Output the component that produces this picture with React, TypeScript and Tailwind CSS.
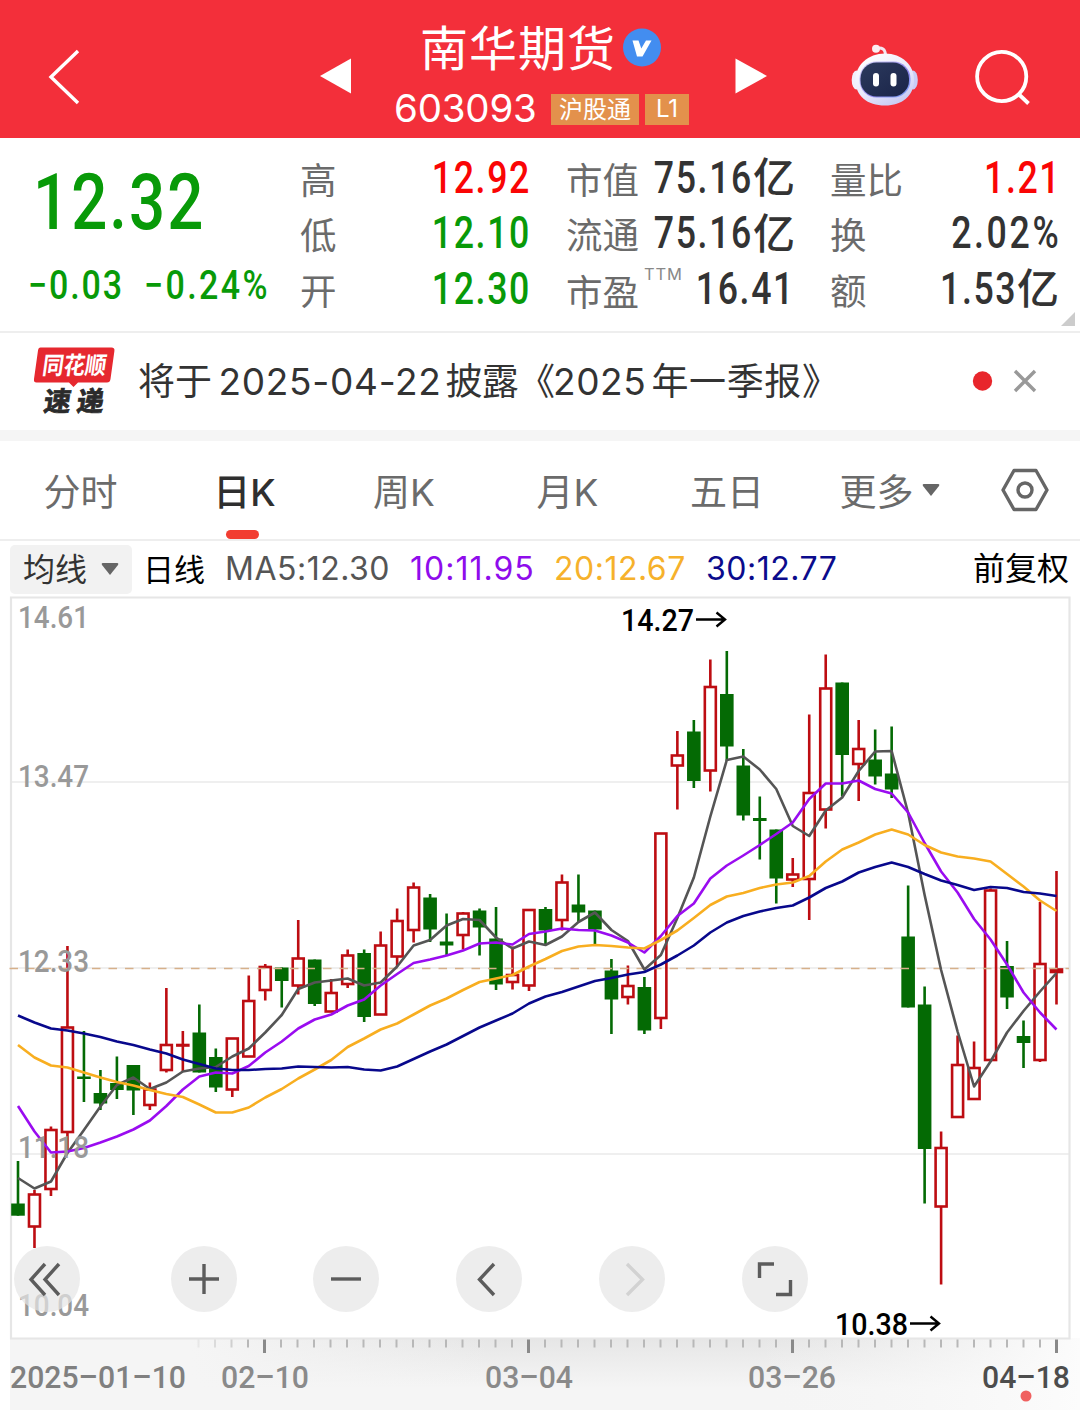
import type { ReactNode } from 'react';
import clsx from 'clsx';

// [direction, high, body top, body bottom, low] in chart coordinates
type Candle = ['up' | 'down', number, number, number, number];

const FIRST_X = 18;
const STEP = 16.484;

const candles: Candle[] = [
  ['down', 1161, 1203.5, 1215.7, 1215.7],
  ['up', 1190, 1194.5, 1226.5, 1248],
  ['up', 1126.5, 1130, 1189, 1196],
  ['up', 946, 1027.5, 1132, 1153],
  ['down', 1031, 1076.5, 1079, 1102],
  ['down', 1070, 1093, 1103.5, 1110],
  ['down', 1056.5, 1083, 1090, 1099],
  ['down', 1065, 1065, 1090.5, 1115],
  ['up', 1082.5, 1089.5, 1105, 1110],
  ['up', 988, 1045, 1070, 1072.5],
  ['up', 1031, 1045, 1045.5, 1071],
  ['down', 1004.5, 1032.5, 1072.5, 1072.5],
  ['down', 1048.5, 1057, 1087.5, 1092],
  ['up', 1038, 1038.5, 1089.5, 1097],
  ['up', 975.5, 1001, 1056.5, 1057],
  ['up', 964, 967, 990, 1000.5],
  ['down', 967.5, 967.5, 981, 1007.5],
  ['up', 920, 958.5, 985.5, 994.5],
  ['down', 959.5, 959.5, 1004, 1006],
  ['up', 979, 993, 1011.5, 1012],
  ['up', 949.5, 955.5, 984, 988],
  ['down', 949.5, 953, 1017, 1022],
  ['up', 931.5, 945.5, 1014.5, 1015],
  ['up', 908.5, 921, 956.5, 966.5],
  ['up', 882.5, 887.5, 930, 942.5],
  ['down', 894, 897.5, 929.5, 942],
  ['down', 913.5, 941.5, 945.5, 955],
  ['up', 912, 913.5, 935, 949.5],
  ['down', 908.5, 910.5, 927.5, 955.5],
  ['down', 907, 938.5, 984.5, 990],
  ['up', 946.5, 975, 982, 989.5],
  ['up', 909, 910, 985.5, 991],
  ['down', 907, 909, 930.5, 945],
  ['up', 874.5, 882.5, 920, 930.5],
  ['down', 874.5, 904.5, 912.5, 922],
  ['down', 910.5, 910.5, 929.5, 944],
  ['down', 959, 970.5, 999.5, 1034],
  ['up', 965.5, 986, 997, 1004.5],
  ['down', 977, 987, 1030.5, 1034],
  ['up', 833, 833.5, 1018, 1029],
  ['up', 731, 755.5, 765.5, 809.5],
  ['down', 720, 731.5, 781, 788],
  ['up', 659.5, 687, 770.5, 791.5],
  ['down', 651, 694, 746.5, 761],
  ['down', 749, 765.5, 815.5, 820.5],
  ['down', 796.5, 818, 821, 859.5],
  ['down', 829.5, 829.5, 878.5, 903.5],
  ['up', 858, 874.5, 879.5, 887],
  ['up', 714.5, 793, 879, 920],
  ['up', 654.5, 688.5, 809.5, 828.5],
  ['down', 682.5, 682.5, 755, 796.5],
  ['up', 720, 749, 764, 801],
  ['down', 729.5, 759.5, 776.5, 784.5],
  ['down', 726.5, 773.5, 789.5, 798],
  ['down', 885.5, 936.5, 1007.5, 1007.5],
  ['down', 986.5, 1004.5, 1149, 1203.5],
  ['up', 1131.5, 1148, 1206.5, 1284.5],
  ['up', 1035.5, 1065, 1117, 1118],
  ['up', 1041.5, 1068, 1099, 1100],
  ['up', 888.5, 890.5, 1060, 1061],
  ['down', 941, 966, 997.5, 1009],
  ['down', 1020.5, 1036, 1043, 1068],
  ['up', 902, 964, 1060, 1062],
  ['up', 871, 969.5, 972, 1004.5],
];

const averages = [
  {
    label: 'MA5:12.30',
    text: 'ml-[21px] w-[185px] text-[#555] tracking-[0.5px]',
    stroke: '#555555',
    ys: [
      1178, 1188.5, 1181.5, 1153, 1130, 1106.5, 1085, 1077.5, 1089, 1082.5, 1071.5, 1068.5, 1067, 1056.5, 1048.5, 1032.5,
      1015, 989, 982.5, 980.5, 978.5, 985.5, 982.5, 966.5, 945.5, 940, 925.5, 919, 920, 937.5, 948.5, 941.5,
      945, 936.5, 922, 912.5, 930, 941, 969.5, 955, 918, 877.5, 816.5, 760, 756.5, 769.5, 789, 826,
      836, 810.5, 797.5, 771, 751.5, 751, 813, 895, 970, 1031.5, 1086.5, 1061.5, 1032.5, 1011, 991.5, 973,
    ],
  },
  {
    label: '10:11.95',
    text: 'w-[144px] text-[#8f0cec] tracking-[1px]',
    stroke: '#9a0cf0',
    ys: [
      1106, 1131.5, 1152.5, 1151.5, 1148, 1142.5, 1136.5, 1129.5, 1120.5, 1106, 1089.5, 1076.5, 1072.5, 1073.5, 1066, 1052.5,
      1041.5, 1028.5, 1019.5, 1014.5, 1005.5, 999.5, 985.5, 974, 963, 959.5, 955.5, 950.5, 943.5, 942.5, 944.5, 934,
      931.5, 928.5, 930, 930.5, 935.5, 942.5, 952.5, 936, 916, 903.5, 878.5, 865.5, 855.5, 845, 834, 822.5,
      799, 783.5, 783.5, 780.5, 789, 793.5, 812.5, 843, 871.5, 892.5, 919, 939.5, 964.5, 992.5, 1012.5, 1029.5,
    ],
  },
  {
    label: '20:12.67',
    text: 'w-[152px] text-[#f6b12b] tracking-[0.5px]',
    stroke: '#f8ae20',
    ys: [
      1045, 1057.5, 1065.5, 1067.5, 1072.5, 1077.5, 1082, 1085.5, 1090, 1094, 1097, 1104.5, 1112.5, 1112.5, 1107.5, 1097.5,
      1089, 1078.5, 1069.5, 1060, 1047, 1038.5, 1029.5, 1023.5, 1014.5, 1005.5, 998.5, 990, 982, 978.5, 975, 966.5,
      959, 951, 946.5, 945, 946, 947.5, 948.5, 940, 930.5, 918, 905, 896.5, 893, 888, 884.5, 882.5,
      876, 861.5, 849.5, 842.5, 834.5, 829.5, 834.5, 845, 852.5, 856.5, 858.5, 861.5, 874, 886.5, 900.5, 911,
    ],
  },
  {
    label: '30:12.77',
    text: 'text-[#0b0b8c] tracking-[0.5px]',
    stroke: '#08088c',
    ys: [
      1015.5, 1022.5, 1028.5, 1030.5, 1033.5, 1037, 1041.5, 1045, 1049.5, 1053.5, 1059.5, 1064, 1068.5, 1070, 1070, 1069,
      1068.5, 1066.5, 1067, 1067.5, 1067, 1069.5, 1070.5, 1066.5, 1059, 1051.5, 1044.5, 1036, 1027.5, 1020.5, 1013.5, 1003.5,
      996.5, 992, 986.5, 981, 978, 974.5, 972, 964.5, 955.5, 945.5, 932.5, 922.5, 916, 911.5, 908, 905.5,
      897.5, 888, 881.5, 872.5, 867, 862.5, 867, 874, 880.5, 885, 890, 887, 888, 892, 893.5, 896,
    ],
  },
];

const priceLabels = [
  { value: '14.61', y: 628 },
  { value: '13.47', y: 787 },
  { value: '12.33', y: 972 },
  { value: '11.18', y: 1158 },
  { value: '10.04', y: 1316 },
];

const dateLabels = [
  { value: '2025–01–10', x: 10, width: 176, color: '#808080' },
  { value: '02–10', x: 221, width: 88, color: '#8a8a8a' },
  { value: '03–04', x: 485, width: 88, color: '#8a8a8a' },
  { value: '03–26', x: 748, width: 88, color: '#8a8a8a' },
  { value: '04–18', x: 982, width: 88, color: '#4d4d4d' },
];

function Header() {
  return (
    <header className="flex h-[138px] bg-[#f32f3a] text-white">
      <div className="flex w-[320px] items-center pt-[16px] pl-[47px]">
        <svg width="34" height="58" viewBox="0 0 34 58" fill="none" stroke="currentColor" strokeWidth="3.4">
          <path d="M31 3 L4 29 L31 55" />
        </svg>
      </div>
      <div className="flex w-[32px] items-center pt-[14px]">
        <svg width="32" height="36" viewBox="0 0 32 36" fill="currentColor">
          <path d="M0 18 L31 0.5 V35.5 Z" />
        </svg>
      </div>
      <div className="flex w-[383px] flex-col">
        <div className="flex h-[92px] items-center pt-[4px] pl-[68px]">
          <h1 className="w-[200px] pt-[2px] text-[48px] leading-none tracking-[1px] whitespace-nowrap">南华期货</h1>
          <svg width="40" height="40" viewBox="0 0 40 40" className="ml-[2px]">
            <circle cx="20" cy="19.5" r="19" fill="#438df0" />
            <path d="M10.5 12.5 H16.5 L19.3 20.5 L24 12.5 H29.5 L20.5 28.5 H15 Z" fill="#fff" />
          </svg>
        </div>
        <div className="flex h-[32px] items-center pl-[42px]">
          <span className="w-[157px] text-[38.5px] leading-none tracking-[-0.2px]">603093</span>
          <span className="mt-[2px] flex h-[31px] w-[88px] items-center justify-center bg-[#e3914c] pt-[2px] text-[24px] whitespace-nowrap">
            沪股通
          </span>
          <span className="mt-[2px] ml-[6px] flex h-[31px] w-[44px] items-center justify-center bg-[#e3914c] text-[24px]">
            L1
          </span>
        </div>
      </div>
      <div className="flex w-[115px] items-center pt-[14px]">
        <svg width="32" height="36" viewBox="0 0 32 36" fill="currentColor">
          <path d="M32 18 L0.5 0.5 V35.5 Z" />
        </svg>
      </div>
      <div className="flex w-[120px] items-center pt-[12px]">
        <Robot />
      </div>
      <div className="flex items-center pt-[15px]">
        <svg width="62" height="60" viewBox="970 46 62 60" fill="none" stroke="currentColor" strokeWidth="3.8">
          <circle cx="1001.7" cy="75.5" r="24.6" />
          <path d="M1018.5 93 L1028.5 102.5" />
        </svg>
      </div>
    </header>
  );
}

function Robot() {
  return (
    <svg width="70" height="64" viewBox="850 43 70 64">
      <defs>
        <linearGradient id="shell" x1="0.2" y1="0" x2="0.8" y2="1">
          <stop offset="0" stopColor="#ffffff" />
          <stop offset="0.55" stopColor="#e9e8fb" />
          <stop offset="1" stopColor="#c3c6f2" />
        </linearGradient>
        <linearGradient id="visor" x1="0" y1="0" x2="1" y2="1">
          <stop offset="0" stopColor="#2c3a5e" />
          <stop offset="1" stopColor="#1a2448" />
        </linearGradient>
        <linearGradient id="rim" x1="0" y1="0" x2="1" y2="1">
          <stop offset="0" stopColor="#d5d3f5" />
          <stop offset="0.6" stopColor="#8f86ee" />
          <stop offset="1" stopColor="#7ba6f7" />
        </linearGradient>
      </defs>
      <path d="M876 48.5 C882 47 885.5 49 885.5 56" fill="none" stroke="#f3e6f0" strokeWidth="3" />
      <circle cx="876" cy="48.8" r="4" fill="#fbeef2" />
      <ellipse cx="856.5" cy="80" rx="4.8" ry="9.5" fill="#f1effb" />
      <ellipse cx="913" cy="80" rx="4.8" ry="9.5" fill="#c9cdf5" />
      <path
        d="M885 53.5 C902 53.5 914 65 914 80 C914 96 902 105.5 885 105.5 C867 105.5 855.5 96 855.5 80 C855.5 65 868 53.5 885 53.5 Z"
        fill="url(#shell)"
      />
      <rect x="859.5" y="61.5" width="51" height="36" rx="17" fill="url(#rim)" />
      <rect x="860.5" y="62.5" width="48.5" height="34" rx="16" fill="url(#visor)" />
      <rect x="873" y="73" width="6" height="13.5" rx="3" fill="#fff" />
      <rect x="890.5" y="73" width="6" height="13.5" rx="3" fill="#fff" />
    </svg>
  );
}

// Narrow figures; zero width, so they grow leftwards from the right edge of the row
function Figure({ children, unit, className }: { children: ReactNode; unit?: string; className?: string }) {
  return (
    <div className={clsx('flex w-0 items-center justify-end pt-[1px] leading-none whitespace-nowrap', className)}>
      <span className="-mr-[2px] shrink-0 origin-right scale-x-[0.82] font-['Roboto'] text-[43.5px] font-medium tracking-[2px]">
        {children}
      </span>
      {unit && <span className="ml-[2px] w-[42px] shrink-0 text-[42px] font-medium">{unit}</span>}
    </div>
  );
}

function Stat({ label, children }: { label: ReactNode; children: ReactNode }) {
  return (
    <div className="flex h-[55.5px] items-center justify-between">
      <span className="pt-[6px] text-[36.5px] leading-none whitespace-nowrap text-[#6b6b6b]">{label}</span>
      {children}
    </div>
  );
}

function Quote() {
  return (
    <section className="relative flex h-[195px] border-b-2 border-[#eeeeee] bg-white">
      <div className="w-[300px] shrink-0 pl-[33px] font-['Roboto'] font-medium text-[#089a08]">
        <div className="mt-[24px] h-[80px] origin-left scale-x-[0.81] text-[78.5px] leading-[80px] tracking-[2.5px]">
          12.32
        </div>
        <div className="mt-[21px] -ml-[5px] flex text-[40px] leading-[46px] whitespace-nowrap">
          <span className="w-[116px] origin-left scale-x-[0.85] tracking-[2.2px]">−0.03</span>
          <span className="origin-left scale-x-[0.85] tracking-[2.8px]">−0.24%</span>
        </div>
      </div>
      <div className="w-[229px] pt-[12px]">
        <Stat label="高">
          <Figure className="text-[#fa0505]">12.92</Figure>
        </Stat>
        <Stat label="低">
          <Figure className="text-[#089a08]">12.10</Figure>
        </Stat>
        <Stat label="开">
          <Figure className="text-[#089a08]">12.30</Figure>
        </Stat>
      </div>
      <div className="ml-[37px] w-[229px] pt-[12px] text-[#333]">
        <Stat label="市值">
          <Figure unit="亿">75.16</Figure>
        </Stat>
        <Stat label="流通">
          <Figure unit="亿">75.16</Figure>
        </Stat>
        <Stat
          label={
            <span className="flex pt-[3px]">
              市盈
              <span className="-mt-[9px] ml-[5px] text-[16.5px] tracking-[0.8px] text-[#888]">TTM</span>
            </span>
          }
        >
          <Figure className="-translate-x-[2px]">16.41</Figure>
        </Stat>
      </div>
      <div className="ml-[35px] w-[229px] pt-[12px] text-[#333]">
        <Stat label="量比">
          <Figure className="text-[#fa0505]">1.21</Figure>
        </Stat>
        <Stat label="换">
          <Figure>
            <span className="tracking-[3.2px]">2.02%</span>
          </Figure>
        </Stat>
        <Stat label="额">
          <Figure unit="亿">1.53</Figure>
        </Stat>
      </div>
      <svg width="14" height="14" viewBox="0 0 14 14" className="absolute right-[5px] bottom-[5px]">
        <path d="M14 0 V14 H0 Z" fill="#cccccc" />
      </svg>
    </section>
  );
}

function NewsBar() {
  return (
    <section className="flex h-[97px] items-center bg-white text-[#333]">
      <svg width="92" height="88" viewBox="32 338 92 88" className="ml-[32px] shrink-0">
        <path
          d="M40.5 347.5 H111.5 Q115 347.5 114.4 351 L110.5 379 Q110 382.5 107 382.5 H78 L73.5 387 L69 382.5 H36.5 Q33.5 382.5 34 379 L38 350.5 Q38.4 347.5 40.5 347.5 Z"
          fill="#e6282f"
        />
        <g transform="skewX(-8)" fontFamily="Noto Sans CJK SC, sans-serif" fontWeight="700">
          <text x="94" y="374" fontSize="24" textLength="64" lengthAdjust="spacingAndGlyphs" fill="#fff">
            同花顺
          </text>
          <text x="100.5" y="411" fontSize="27" textLength="60" fill="#2b2b2b" stroke="#2b2b2b" strokeWidth="0.8">
            速递
          </text>
        </g>
      </svg>
      <p className="ml-[14px] flex text-[37px] leading-none whitespace-nowrap">
        <span className="w-[80.5px]">将于</span>
        <span className="w-[227px] tracking-[0.7px]">2025-04-22</span>
        <span className="w-[107.5px] tracking-[-0.8px]">披露《</span>
        <span className="w-[98.5px] tracking-[0.6px]">2025</span>
        <span className="tracking-[0.6px]">年一季报》</span>
      </p>
      <svg width="66" height="24" viewBox="971 368.5 66 24" className="-mt-[2px] mr-[43px] ml-auto shrink-0">
        <circle cx="982.5" cy="380.5" r="9.7" fill="#e8262c" />
        <path d="M1015 370.5 L1035 390.5 M1035 370.5 L1015 390.5" stroke="#999" strokeWidth="3.4" />
      </svg>
    </section>
  );
}

function Caret({ className }: { className?: string }) {
  return (
    <svg width="18" height="12" viewBox="0 0 18 12" fill="#666" className={className}>
      <path d="M1.5 0 H16.5 Q18 0.5 17 2 L9 12 L1 2 Q0 0.5 1.5 0 Z" />
    </svg>
  );
}

function PeriodTabs() {
  const tab = 'flex h-full items-center justify-center whitespace-nowrap';
  return (
    <nav className="flex h-[100px] border-b-2 border-[#eeeeee] bg-white text-[37px] leading-none text-[#6b6b6b]">
      <button className={clsx(tab, 'w-[161px] pt-[4px]')}>分时</button>
      <button className={clsx(tab, 'relative w-[167px] pt-[4px] font-medium text-[#2f2f2f]')}>
        日K
        <span className="absolute bottom-0 left-[65px] h-[9px] w-[33px] rounded-full bg-[#f23d31]" />
      </button>
      <button className={clsx(tab, 'w-[152px] pt-[4px]')}>周K</button>
      <button className={clsx(tab, 'w-[175px] pt-[4px]')}>月K</button>
      <button className={clsx(tab, 'w-[144px] pt-[4px]')}>五日</button>
      <button className={clsx(tab, 'w-[181px] pt-[4px]')}>
        更多
        <Caret className="-mt-[4px] ml-[8px]" />
      </button>
      <button className={clsx(tab, 'w-[90px]')}>
        <svg width="50" height="44" viewBox="0 0 50 44" fill="none" stroke="#666" strokeWidth="3.4" strokeLinejoin="round">
          <path d="M14 2.5 H36 L47 22 L36 41.5 H14 L3 22 Z" />
          <circle cx="25" cy="22" r="7" />
        </svg>
      </button>
    </nav>
  );
}

function AverageBar() {
  return (
    <div className="flex h-[55px] items-center bg-white pt-[1px] text-[32px] leading-none whitespace-nowrap">
      <button className="ml-[10px] flex h-[49px] w-[122px] items-center rounded-[5px] bg-[#f2f2f2] pt-[2px] pl-[13px] text-[#333]">
        均线
        <Caret className="-mt-[2px] ml-[14px]" />
      </button>
      <span className="ml-[11px] w-[61px] text-[31px] text-black">日线</span>
      {averages.map((line) => (
        <span key={line.label} className={line.text}>
          {line.label}
        </span>
      ))}
      <span className="mr-[11px] ml-auto text-black">前复权</span>
    </div>
  );
}

function CandleMark({ candle, index }: { candle: Candle; index: number }) {
  const [direction, high, top, bottom, low] = candle;
  const x = FIRST_X + index * STEP;

  if (direction === 'down') {
    return (
      <g fill="#046a04">
        <rect x={x - 1.3} y={high} width="2.6" height={low - high} />
        <rect x={x - 6.8} y={top} width="13.6" height={bottom - top} />
      </g>
    );
  }
  return (
    <g fill="none" stroke="#bd0d12" strokeWidth="2.6">
      <path d={`M${x} ${high} V${top} M${x} ${bottom} V${low}`} />
      <rect x={x - 5.5} y={top} width="11" height={bottom - top} />
    </g>
  );
}

function Chart() {
  const ticks = Array.from({ length: 53 }, (_, i) => 1056.5 - i * 16.5);

  return (
    <svg width="1080" height="814" viewBox="0 596 1080 814" className="block">
      <defs>
        <linearGradient id="axisShade" x1="0" y1="0" x2="0" y2="1">
          <stop offset="0" stopColor="#e6e6e6" />
          <stop offset="1" stopColor="#f5f5f5" />
        </linearGradient>
        <linearGradient id="axisFade" x1="0" y1="0" x2="1" y2="0">
          <stop offset="0" stopColor="#f5f5f5" />
          <stop offset="0.17" stopColor="#f5f5f5" />
          <stop offset="0.45" stopColor="#f5f5f5" stopOpacity="0" />
          <stop offset="0.7" stopColor="#f5f5f5" stopOpacity="0" />
          <stop offset="1" stopColor="#fcfcfc" />
        </linearGradient>
      </defs>

      <rect x="10" y="1338" width="1070" height="72" fill="#f5f5f5" />
      <rect x="10" y="1338" width="1070" height="50" fill="url(#axisShade)" />
      <rect x="10" y="1338" width="1070" height="72" fill="url(#axisFade)" />

      <g stroke="#efefef" strokeWidth="2">
        <path d="M11 782 H1069 M11 968 H1069 M11 1154 H1069" />
        <path d="M11 597.5 H1069.5 V1338.5 H11 Z" fill="none" stroke="#e6e6e6" strokeWidth="2.2" />
      </g>

      {candles.map((candle, i) => (
        <CandleMark key={i} candle={candle} index={i} />
      ))}
      <path d="M9.5 968.5 H1069" stroke="#d6b08a" strokeWidth="1.6" strokeDasharray="8.5 8" />
      {averages.map((line) => (
        <polyline
          key={line.label}
          points={line.ys.map((y, i) => `${FIRST_X + i * STEP},${y}`).join(' ')}
          fill="none"
          stroke={line.stroke}
          strokeWidth="2.6"
          strokeLinejoin="round"
        />
      ))}

      <g fontFamily="Roboto, sans-serif" fontWeight="500" fontSize="31.5">
        {priceLabels.map((label) => (
          <text key={label.value} x="18" y={label.y} fill="#999" textLength="71" lengthAdjust="spacingAndGlyphs">
            {label.value}
          </text>
        ))}
        <text x="621" y="631" textLength="73" lengthAdjust="spacingAndGlyphs">
          14.27
        </text>
        <text x="835" y="1334.5" textLength="73" lengthAdjust="spacingAndGlyphs">
          10.38
        </text>
        {dateLabels.map((label) => (
          <text
            key={label.value}
            x={label.x}
            y="1387.5"
            fill={label.color}
            textLength={label.width}
            lengthAdjust="spacingAndGlyphs"
          >
            {label.value}
          </text>
        ))}
      </g>
      <g fill="none" stroke="#000" strokeWidth="2.4">
        <path d="M696 619.5 H725 M716.5 612.5 L725 619.5 L716.5 626.5" />
        <path d="M910 1323.5 H939 M930.5 1316.5 L939 1323.5 L930.5 1330.5" />
      </g>

      {ticks.map((x, i) => {
        const major = i % 16 === 0;
        return (
          <path
            key={x}
            d={`M${x} 1339.5 V${major ? 1353 : 1347.5}`}
            stroke={major ? '#8a8a8a' : '#b8b8b8'}
            strokeWidth={major ? 3 : 2}
            opacity={i > 49 ? (53 - i) / 5 : 1}
          />
        );
      })}
      <circle cx="1026" cy="1396" r="5.5" fill="#f0605f" />
    </svg>
  );
}

const tools = [
  { name: 'fast back', box: 'ml-[14px]', path: 'M31 18 L17 33.5 L31 49 M45 18 L31 33.5 L45 49' },
  { name: 'zoom in', box: 'ml-[90.5px]', path: 'M18 33 H48 M33 18 V48' },
  { name: 'zoom out', box: 'ml-[76.8px]', path: 'M18 33 H48' },
  { name: 'previous', box: 'ml-[76.8px]', path: 'M38 18 L23.5 33.5 L38 49' },
  { name: 'next', box: 'ml-[76.8px]', path: 'M28 18 L43.5 33.5 L28 49', disabled: true },
  { name: 'full screen', box: 'ml-[76.8px]', path: 'M17.5 32 V18 H32 M48.5 34 V48.5 H34' },
];

function ChartTools() {
  return (
    <div className="absolute top-[650px] left-0 flex">
      {tools.map((tool) => (
        <button
          key={tool.name}
          aria-label={tool.name}
          disabled={tool.disabled}
          className={clsx(
            'h-[66px] w-[66px] rounded-full bg-[#e6e6e6]/70',
            tool.box,
            tool.disabled ? 'text-[#d2d2d2]' : 'text-[#5c5c5c]',
          )}
        >
          <svg width="66" height="66" viewBox="0 0 66 66" fill="none" stroke="currentColor" strokeWidth="3.4">
            <path d={tool.path} />
          </svg>
        </button>
      ))}
    </div>
  );
}

export default function App() {
  return (
    <div className="h-[1410px] w-[1080px] overflow-hidden bg-white font-['Inter','Noto_Sans_CJK_SC',sans-serif]">
      <Header />
      <Quote />
      <NewsBar />
      <div className="h-[11px] bg-[#f5f5f5]" />
      <PeriodTabs />
      <AverageBar />
      <div className="relative">
        <Chart />
        <ChartTools />
      </div>
    </div>
  );
}
